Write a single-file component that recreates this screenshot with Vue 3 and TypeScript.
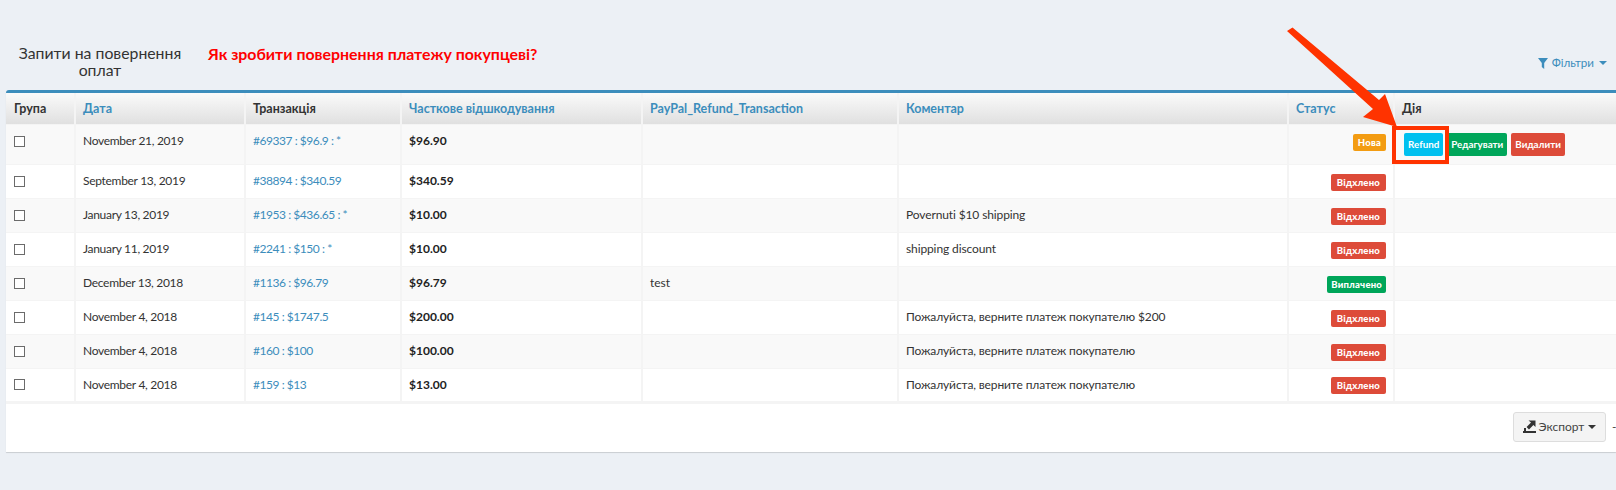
<script setup lang="ts">
interface Row {
  date: string
  tx: string
  amount: string
  paypal: string
  comment: string
  status: string
  tone: string
}
const rows: Row[] = [
  { date: 'November 21, 2019', tx: '#69337 : $96.9 : *', amount: '$96.90', paypal: '', comment: '', status: 'Нова', tone: 'orange' },
  { date: 'September 13, 2019', tx: '#38894 : $340.59', amount: '$340.59', paypal: '', comment: '', status: 'Відхлено', tone: 'red' },
  { date: 'January 13, 2019', tx: '#1953 : $436.65 : *', amount: '$10.00', paypal: '', comment: 'Povernuti $10 shipping', status: 'Відхлено', tone: 'red' },
  { date: 'January 11, 2019', tx: '#2241 : $150 : *', amount: '$10.00', paypal: '', comment: 'shipping discount', status: 'Відхлено', tone: 'red' },
  { date: 'December 13, 2018', tx: '#1136 : $96.79', amount: '$96.79', paypal: 'test', comment: '', status: 'Виплачено', tone: 'green' },
  { date: 'November 4, 2018', tx: '#145 : $1747.5', amount: '$200.00', paypal: '', comment: 'Пожалуйста, верните платеж покупателю $200', status: 'Відхлено', tone: 'red' },
  { date: 'November 4, 2018', tx: '#160 : $100', amount: '$100.00', paypal: '', comment: 'Пожалуйста, верните платеж покупателю', status: 'Відхлено', tone: 'red' },
  { date: 'November 4, 2018', tx: '#159 : $13', amount: '$13.00', paypal: '', comment: 'Пожалуйста, верните платеж покупателю', status: 'Відхлено', tone: 'red' },
]
</script>

<template>
  <div class="page">
    <div class="top">
      <h3 class="title">Запити на повернення оплат</h3>
      <a class="howto">Як зробити повернення платежу покупцеві?</a>
      <a class="filters">
        <svg class="funnel" width="10" height="11" viewBox="0 0 10 11"><path d="M0 0h10L6.2 5V11L3.8 9V5z" fill="#3c8dbc" /></svg>
        <span>Фільтри</span>
        <span class="caret"></span>
      </a>
    </div>
    <div class="box">
      <table class="grid">
        <colgroup>
          <col style="width:69px" /><col style="width:170px" /><col style="width:156px" /><col style="width:241px" />
          <col style="width:256px" /><col style="width:390px" /><col style="width:106px" /><col style="width:222px" />
        </colgroup>
        <thead>
          <tr>
            <th>Група</th>
            <th class="sort">Дата</th>
            <th>Транзакція</th>
            <th class="sort">Часткове відшкодування</th>
            <th class="sort">PayPal_Refund_Transaction</th>
            <th class="sort">Коментар</th>
            <th class="sort">Статус</th>
            <th>Дія</th>
          </tr>
        </thead>
        <tbody>
          <tr v-for="(row, i) in rows" :key="i" :class="{ first: i === 0 }">
            <td><span class="check"></span></td>
            <td class="date">{{ row.date }}</td>
            <td class="link">{{ row.tx }}</td>
            <td class="money">{{ row.amount }}</td>
            <td>{{ row.paypal }}</td>
            <td class="comment">{{ row.comment }}</td>
            <td class="status"><span class="label" :class="row.tone">{{ row.status }}</span></td>
            <td class="actions">
              <template v-if="i === 0">
                <span class="btn blue">Refund</span>
                <span class="btn green">Редагувати</span>
                <span class="btn red">Видалити</span>
              </template>
            </td>
          </tr>
        </tbody>
      </table>
      <div class="foot">
        <span class="export">
          <svg width="13" height="13" viewBox="0 0 13 13"><path d="M0 11h13v2H0zM1 8h2v3H1zM5.5 0.5H12.5V7L10.4 5L6 9.4L3.6 7L8 2.6z" fill="#333" /></svg>
          <span>Экспорт</span>
          <span class="caret dark"></span>
        </span>
        <span class="dash">-</span>
      </div>
    </div>
    <div class="callout"></div>
    <svg class="arrow" width="115" height="105" viewBox="0 0 115 105">
      <path d="M2 6L7.5 2.5L94 75L100 69L112 102L78 92L88 84z" fill="#ff3300" />
    </svg>
  </div>
</template>

<style>
html, body { margin: 0; background: #ecf0f5; }
</style>

<style scoped>
.page {
  position: relative;
  width: 1616px;
  height: 490px;
  overflow: hidden;
  background: #ecf0f5;
  font-family: Lato, "Liberation Sans", sans-serif;
  font-size: 12px;
  color: #333;
}
.top {
  display: flex;
  align-items: flex-start;
  height: 90px;
  padding: 44px 9px 0 9px;
  box-sizing: border-box;
}
.title {
  width: 182px;
  margin: 0;
  font-size: 15.8px;
  line-height: 17px;
  font-weight: 400;
  text-align: center;
  color: #333;
}
.howto {
  margin: 1px 0 0 17px;
  font-size: 15.9px;
  line-height: 18px;
  font-weight: 700;
  color: #f00;
}
.filters {
  margin: 12px 0 0 auto;
  display: flex;
  align-items: center;
  gap: 4px;
  font-size: 11.6px;
  line-height: 14px;
  color: #3c8dbc;
}
.caret {
  width: 0;
  height: 0;
  margin-left: 1px;
  border-top: 4px solid #3c8dbc;
  border-left: 4px solid transparent;
  border-right: 4px solid transparent;
}
.caret.dark { border-top-color: #333; }
.box {
  margin-left: 6px;
  width: 1610px;
  height: 362px;
  box-sizing: border-box;
  background: #fff;
  border-top: 3px solid #3c8dbc;
  border-radius: 3px 0 0 0;
  box-shadow: 0 1px 1px rgba(0, 0, 0, 0.15);
  overflow: hidden;
}
.grid {
  table-layout: fixed;
  width: 1610px;
  border-collapse: collapse;
  border-bottom: 3px solid #f4f4f4;
}
th {
  height: 31px;
  padding: 0 7px;
  box-sizing: border-box;
  text-align: left;
  font-weight: 700;
  font-size: 12.5px;
  color: #333;
  border-left: 2px solid #f4f4f4;
  background: linear-gradient(#fafafa, #e0e0e0);
}
th:first-child, td:first-child { border-left: 0; padding-left: 8px; }
th.sort { color: #3c8dbc; }
td {
  height: 34px;
  padding: 0 7px 1px;
  box-sizing: border-box;
  border-left: 2px solid #f4f4f4;
  border-top: 1px solid #f4f4f4;
  vertical-align: middle;
}
tr.first td { height: 40px; padding-bottom: 7px; }
tr.first td.status { padding-top: 0; padding-bottom: 3px; }
tr.first td.actions { padding-bottom: 0; }
tbody tr:nth-child(odd) td { background: #f9f9f9; }
.check {
  display: block;
  width: 9px;
  height: 9px;
  margin-top: 1px;
  border: 1px solid #6b6b6b;
  background: #fff;
}
.date { letter-spacing: -0.3px; }
.link { color: #3c8dbc; letter-spacing: -0.45px; }
.comment { letter-spacing: -0.12px; }
.money { font-weight: 700; color: #222; }
.status { text-align: right; padding-right: 7px; padding-top: 2px; padding-bottom: 0; }
.label {
  display: inline-block;
  height: 17px;
  padding: 0 6px;
  border-radius: 2px;
  font-size: 9.5px;
  line-height: 17px;
  font-weight: 900;
  letter-spacing: 0.2px;
  color: #fff;
}
.label.orange { background: #f39c12; padding: 0 5px; }
.label.red { background: #dd4b39; }
.label.green { background: #00a65a; padding: 0 4px; }
.actions { white-space: nowrap; padding-left: 9px; }
.btn {
  display: inline-block;
  height: 23px;
  margin-right: 4px;
  padding: 0 4px;
  border-radius: 2px;
  font-size: 9.8px;
  line-height: 23px;
  font-weight: 700;
  color: #fff;
  vertical-align: middle;
}
.btn.blue { background: #00c0ef; }
.btn.green { background: #00a65a; }
.btn.red { background: #dd4b39; }
.foot {
  display: flex;
  align-items: center;
  margin-top: 8px;
  padding-left: 1507px;
}
.export {
  display: flex;
  flex: none;
  align-items: center;
  justify-content: center;
  gap: 3px;
  width: 93px;
  height: 30px;
  box-sizing: border-box;
  background: #f4f4f4;
  border: 1px solid #ddd;
  border-radius: 3px;
  color: #444;
  font-size: 12px;
}
.dash { margin-left: 6px; color: #444; }
.callout {
  position: absolute;
  left: 1392px;
  top: 126px;
  width: 57px;
  height: 38px;
  box-sizing: border-box;
  border: 4px solid #ff3300;
}
.arrow {
  position: absolute;
  left: 1285px;
  top: 25px;
}
</style>
